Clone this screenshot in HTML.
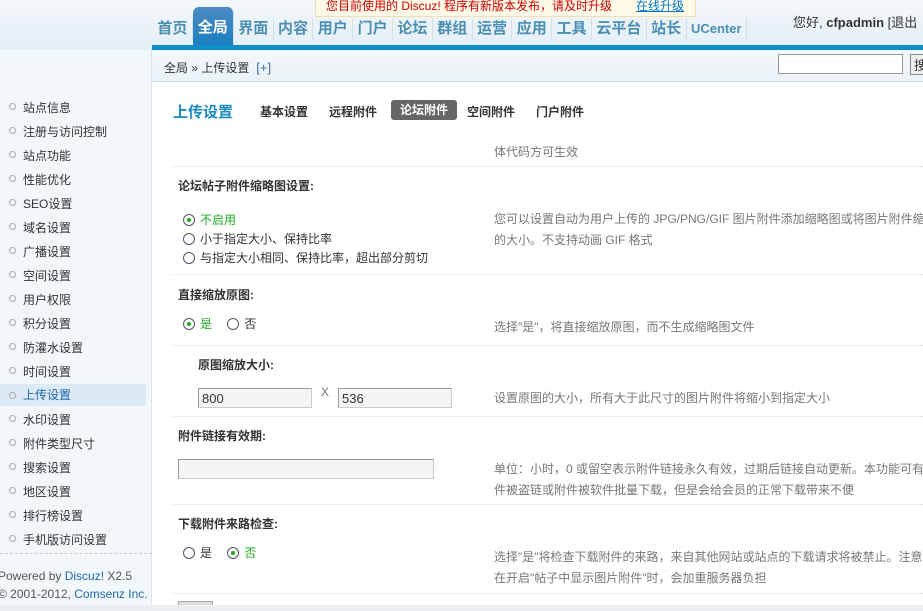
<!DOCTYPE html><html><head><meta charset="utf-8"><style>
*{margin:0;padding:0;box-sizing:border-box}
body{width:923px;height:611px;overflow:hidden;font:12px "Liberation Sans","Noto Sans CJK SC",sans-serif;color:#333;background:#fff;position:relative}
.a{position:absolute;white-space:nowrap}
.hd{left:0;top:0;width:923px;height:50px;background:linear-gradient(#f4f8fb,#e3eef6)}
.nav{top:18px;left:153px;font-size:15px;font-weight:bold;color:#4b8fb3;display:flex}
.nav span{padding:0 4.4px;border-right:1px solid #d2e0ea;height:22px;line-height:22px}
.on{background:linear-gradient(#4d8ac2,#1a7fc1);color:#fff;border-radius:6px 6px 0 0;margin-top:-11px;height:39px!important;line-height:42px!important;padding:0 5px!important}
.bl{left:152px;top:45px;width:771px;height:5px;background:#0e8fc5}
.bc{left:152px;top:50px;width:771px;height:32px;background:linear-gradient(#f3f8fb,#eaf2f7);border-bottom:1px solid #cbdde8}
.sb{left:0;top:50px;width:152px;height:555px;background:#f1f7fb;border-right:1px solid #d6e5ef}
.sb div{position:absolute;left:23px;font-size:12px;color:#333}
.sb div:before{content:"";position:absolute;left:-14px;top:4px;width:5px;height:5px;border:1px solid #aaa;border-radius:50%}
.sel{background:#dbeaf5;left:0!important;width:146px;padding-left:23px}
.sel:before{left:9px!important;top:8px!important}
.sep{left:172px;width:751px;border-top:1px dotted #ddd}
.t{font-weight:bold;color:#333}
.g{color:#777}
.r{display:inline-block;width:12px;height:12px;border:1px solid #556;border-radius:50%;vertical-align:-2px;margin-right:5px;position:relative}
.r.c:after{content:"";position:absolute;left:3px;top:3px;width:4px;height:4px;background:#2a2;border-radius:50%}
.in{border:1px solid #999;border-right-color:#ccc;border-bottom-color:#ccc;background:#f5f5f5;height:20px;padding:2px 3px;font-size:13px}
</style></head><body>
<div class="a hd"></div>
<div class="a" style="left:315px;top:0;width:381px;height:17px;background:#fffbe8;border:1px solid #f0e0b0;border-top:0;color:#c00;font-size:12px;padding-left:10px;line-height:12px">您目前使用的 Discuz! 程序有新版本发布，请及时升级　　<u style="color:#07c">在线升级</u></div>
<div class="a nav"><span>首页</span><span class="on">全局</span><span>界面</span><span>内容</span><span>用户</span><span>门户</span><span>论坛</span><span>群组</span><span>运营</span><span>应用</span><span>工具</span><span>云平台</span><span>站长</span><span style="font-size:13px">UCenter</span></div>
<div class="a" style="left:793px;top:12px;font-size:13px">您好, <b>cfpadmin</b> [退出</div>
<div class="a bl"></div><div class="a bc"></div>
<div class="a" style="left:164px;top:59px">全局 » 上传设置 <span style="color:#4670a0;font-size:13px">&nbsp;[+]</span></div>
<div class="a" style="left:778px;top:54px;width:125px;height:20px;border:1px solid #999;background:#fff"></div>
<div class="a" style="left:910px;top:54px;width:20px;height:21px;border:1px solid #888;background:#eee;font-size:13px;padding-left:3px">搜</div>
<div class="a sb">
<div style="top:49px">站点信息</div><div style="top:73px">注册与访问控制</div><div style="top:97px">站点功能</div><div style="top:121px">性能优化</div><div style="top:145px">SEO设置</div><div style="top:169px">域名设置</div><div style="top:193px">广播设置</div><div style="top:217px">空间设置</div><div style="top:241px">用户权限</div><div style="top:265px">积分设置</div><div style="top:289px">防灌水设置</div><div style="top:313px">时间设置</div><div class="sel" style="top:334px;height:22px;line-height:22px;color:#2266aa">上传设置</div><div style="top:361px">水印设置</div><div style="top:385px">附件类型尺寸</div><div style="top:409px">搜索设置</div><div style="top:433px">地区设置</div><div style="top:457px">排行榜设置</div><div style="top:481px">手机版访问设置</div>
</div>
<div class="a" style="left:0;top:553px;width:152px;border-top:1px dashed #ccc"></div>
<div class="a" style="left:-2px;top:569px;color:#555">Powered by <span style="color:#2266aa">Discuz!</span> X2.5</div>
<div class="a" style="left:-2px;top:587px;color:#555">© 2001-2012, <span style="color:#2266aa">Comsenz Inc.</span></div>
<div class="a" style="left:173px;top:101px;font-size:15px;font-weight:bold;color:#1a8bc0">上传设置</div>
<div class="a t" style="left:260px;top:103px">基本设置</div><div class="a t" style="left:329px;top:103px">远程附件</div>
<div class="a" style="left:391px;top:100px;width:66px;height:20px;background:#666;color:#fff;font-weight:bold;border-radius:3px;text-align:center;line-height:20px">论坛附件</div>
<div class="a t" style="left:467px;top:103px">空间附件</div><div class="a t" style="left:536px;top:103px">门户附件</div>
<div class="a g" style="left:494px;top:143px">体代码方可生效</div>
<div class="a sep" style="top:166px"></div>
<div class="a t" style="left:178px;top:177px">论坛帖子附件缩略图设置:</div>
<div class="a" style="left:183px;top:211px;color:#2a2"><span class="r c"></span>不启用</div>
<div class="a" style="left:183px;top:230px"><span class="r"></span>小于指定大小、保持比率</div>
<div class="a" style="left:183px;top:249px"><span class="r"></span>与指定大小相同、保持比率，超出部分剪切</div>
<div class="a g" style="left:494px;top:210px">您可以设置自动为用户上传的 JPG/PNG/GIF 图片附件添加缩略图或将图片附件缩</div>
<div class="a g" style="left:494px;top:231px">的大小。不支持动画 GIF 格式</div>
<div class="a sep" style="top:274px"></div>
<div class="a t" style="left:178px;top:286px">直接缩放原图:</div>
<div class="a" style="left:183px;top:315px"><span class="r c"></span><span style="color:#2a2">是</span>　 <span class="r"></span>否</div>
<div class="a g" style="left:494px;top:318px">选择"是"，将直接缩放原图，而不生成缩略图文件</div>
<div class="a sep" style="top:345px"></div>
<div class="a t" style="left:198px;top:356px">原图缩放大小:</div>
<div class="a in" style="left:198px;top:388px;width:114px">800</div>
<div class="a g" style="left:321px;top:385px">X</div>
<div class="a in" style="left:338px;top:388px;width:114px">536</div>
<div class="a g" style="left:494px;top:389px">设置原图的大小，所有大于此尺寸的图片附件将缩小到指定大小</div>
<div class="a sep" style="top:416px"></div>
<div class="a t" style="left:178px;top:427px">附件链接有效期:</div>
<div class="a in" style="left:178px;top:459px;width:256px"></div>
<div class="a g" style="left:494px;top:460px">单位：小时，0 或留空表示附件链接永久有效，过期后链接自动更新。本功能可有</div>
<div class="a g" style="left:494px;top:481px">件被盗链或附件被软件批量下载，但是会给会员的正常下载带来不便</div>
<div class="a sep" style="top:504px"></div>
<div class="a t" style="left:178px;top:515px">下载附件来路检查:</div>
<div class="a" style="left:183px;top:544px"><span class="r"></span>是　 <span class="r c"></span><span style="color:#2a2">否</span></div>
<div class="a g" style="left:494px;top:548px">选择"是"将检查下载附件的来路，来自其他网站或站点的下载请求将被禁止。注意</div>
<div class="a g" style="left:494px;top:569px">在开启"帖子中显示图片附件"时，会加重服务器负担</div>
<div class="a sep" style="top:593px"></div>
<div class="a" style="left:178px;top:601px;width:35px;height:10px;background:#ddd;border:1px solid #aaa"></div>
<div class="a" style="left:0;top:605px;width:923px;height:6px;background:#e8eef2"></div>
</body></html>
